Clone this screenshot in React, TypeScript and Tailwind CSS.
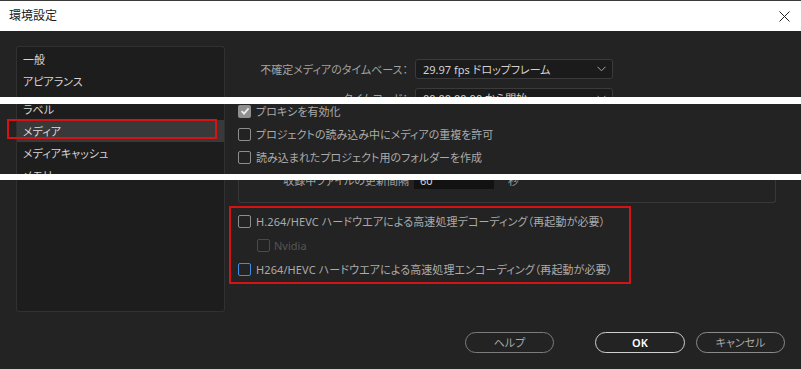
import React from "react";

const FONT = "font-['Noto_Sans','Noto_Sans_CJK_JP',sans-serif] [font-feature-settings:'palt']";

function Box({ kind }: { kind: "off" | "on" | "blue" | "dis" }) {
  if (kind === "on") {
    return (
      <span className="w-[13px] h-[13px] shrink-0 rounded-[2px] bg-[#8f8f8f] flex items-center justify-center">
        <svg width="10" height="10" viewBox="0 0 10 10">
          <path d="M1.6 5.2 L4 7.6 L8.6 2.4" fill="none" stroke="#ececec" strokeWidth="1.8" />
        </svg>
      </span>
    );
  }
  if (kind === "blue") {
    return <span className="w-[13px] h-[13px] shrink-0 rounded-[2px] border-[1.5px] border-[#3d8ee6]" />;
  }
  if (kind === "dis") {
    return <span className="w-[13px] h-[13px] shrink-0 rounded-[2px] border-[1.5px] border-[#4a4a4a]" />;
  }
  return <span className="w-[13px] h-[13px] shrink-0 rounded-[2px] border-[1.5px] border-[#8d8d8d]" />;
}

function Chevron() {
  return (
    <svg width="9" height="6" viewBox="0 0 9 6" className="ml-auto mr-[6px] shrink-0">
      <path d="M0.5 0.8 L4.5 4.8 L8.5 0.8" fill="none" stroke="#a8a8a8" strokeWidth="1" />
    </svg>
  );
}

function Item({ children, selected }: { children: React.ReactNode; selected?: boolean }) {
  return (
    <div
      className={
        selected
          ? "h-[22px] flex items-center pl-[6px] bg-[#393939] text-[#dcdcdc] whitespace-nowrap"
          : "h-[22px] flex items-center pl-[6px] text-[#d4d4d4] whitespace-nowrap"
      }
    >
      {children}
    </div>
  );
}

export default function App() {
  return (
    <div className={`w-[801px] h-[369px] overflow-hidden bg-[#232323] text-[11px] leading-none whitespace-nowrap ${FONT}`}>
      {/* Title bar */}
      <div className="h-[31px] bg-white border-t border-[#3a3a3a] flex items-center pl-[9px] pr-[11px]">
        <span className="text-[12px] text-[#1a1a1a]">環境設定</span>
        <svg width="11" height="11" viewBox="0 0 11 11" className="ml-auto">
          <path d="M0.5 0.5 L10.5 10.5 M10.5 0.5 L0.5 10.5" stroke="#222" strokeWidth="1" />
        </svg>
      </div>

      {/* Section A */}
      <div className="h-[66px] flex overflow-hidden">
        <div className="w-[225px] shrink-0 pl-[16px] pt-[15px]">
          <div className="h-[60px] bg-[#1d1d1d] border border-b-0 border-[#313131] rounded-t-[3px] pt-[1px]">
            <Item>一般</Item>
            <Item>アピアランス</Item>
          </div>
        </div>
        <div className="flex-1 pt-[28px]">
          <div className="flex items-center h-[20px]">
            <div className="w-[183px] text-right text-[#a2a2a2]">不確定メディアのタイムベース：</div>
            <div className="ml-[7px] w-[198px] h-[20px] bg-[#1b1b1b] border border-[#3b3b3b] rounded-[3px] flex items-center pl-[7px] text-[#d2d2d2]">
              <span>29.97 fps ドロップフレーム</span>
              <Chevron />
            </div>
          </div>
          <div className="flex items-center h-[20px] mt-[9px]">
            <div className="w-[183px] text-right text-[#a2a2a2]">タイムコード：</div>
            <div className="ml-[7px] w-[198px] h-[20px] bg-[#1b1b1b] border border-[#3b3b3b] rounded-[3px] flex items-center pl-[7px] text-[#d2d2d2]">
              <span>00:00:00:00 から開始</span>
              <Chevron />
            </div>
          </div>
        </div>
      </div>

      <div className="h-[7px] bg-white" />

      {/* Section B */}
      <div className="h-[70px] flex overflow-hidden relative">
        <div className="w-[225px] shrink-0 pl-[16px]">
          <div className="h-[70px] bg-[#1d1d1d] border-x border-[#313131] flex flex-col">
            <div className="-mt-[6px]">
              <Item>ラベル</Item>
              <Item selected>メディア</Item>
              <Item>メディアキャッシュ</Item>
              <Item>メモリ</Item>
            </div>
          </div>
        </div>
        <div className="flex-1 pl-[13px] -mt-[5px] text-[#ababab]">
          <div className="h-[24px] flex items-center gap-[5px]">
            <Box kind="on" />
            <span>プロキシを有効化</span>
          </div>
          <div className="h-[23px] flex items-center gap-[5px]">
            <Box kind="off" />
            <span>プロジェクトの読み込み中にメディアの重複を許可</span>
          </div>
          <div className="h-[23px] flex items-center gap-[5px]">
            <Box kind="off" />
            <span>読み込まれたプロジェクト用のフォルダーを作成</span>
          </div>
        </div>
        <div className="absolute left-[7px] top-[15px] w-[210px] h-[20px] border-2 border-[#d41414]" />
      </div>

      <div className="h-[6px] bg-white" />

      {/* Section C */}
      <div className="h-[189px] flex items-start overflow-hidden">
        <div className="w-[225px] shrink-0 pl-[16px]">
          <div className="h-[132px] bg-[#1d1d1d] border-x border-b border-[#313131] rounded-b-[3px]" />
        </div>
        <div className="flex-1 flex flex-col">
          <div className="ml-[13px] w-[538px] h-[23px] border-x border-b border-[#383838] rounded-b-[3px] flex flex-col">
            <div className="-mt-[10px] h-[20px] flex items-center">
              <div className="w-[170px] text-right text-[#a2a2a2]">収録中ファイルの更新間隔</div>
              <div className="ml-[5px] w-[80px] h-[18px] bg-[#121212] flex items-center pl-[6px] text-[#d2d2d2]">60</div>
              <span className="ml-[14px] text-[#a2a2a2]">秒</span>
            </div>
          </div>

          <div className="ml-[4px] mt-[3px] w-[402px] h-[78px] border-2 border-[#d41414] pl-[7px] pt-[1px] flex flex-col">
            <div className="h-[24px] flex items-center gap-[5px] text-[#ababab]">
              <Box kind="off" />
              <span className="tracking-[0.1px]">H.264/HEVC ハードウエアによる高速処理デコーディング（再起動が必要）</span>
            </div>
            <div className="h-[24px] flex items-center gap-[4px] pl-[19px] text-[#555555]">
              <Box kind="dis" />
              <span>Nvidia</span>
            </div>
            <div className="h-[24px] flex items-center gap-[5px] text-[#ababab]">
              <Box kind="blue" />
              <span className="tracking-[0.1px]">H264/HEVC ハードウエアによる高速処理エンコーディング（再起動が必要）</span>
            </div>
          </div>

          <div className="mt-[48px] flex">
            <div className="ml-[240px] w-[89px] h-[21px] rounded-full border-[1.5px] border-[#7c7c7c] flex items-center justify-center text-[#a8a8a8]">ヘルプ</div>
            <div className="ml-[41px] w-[90px] h-[21px] rounded-full border-[1.5px] border-[#cfcfcf] flex items-center justify-center text-white font-semibold">OK</div>
            <div className="ml-[11px] w-[89px] h-[21px] rounded-full border-[1.5px] border-[#8a8a8a] flex items-center justify-center text-[#a8a8a8]">キャンセル</div>
          </div>
        </div>
      </div>
    </div>
  );
}
